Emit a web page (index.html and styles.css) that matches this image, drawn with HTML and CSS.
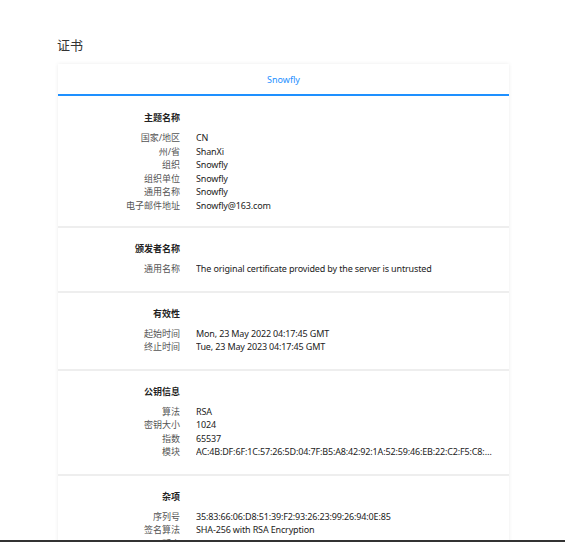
FILE: index.html
```html
<!DOCTYPE html>
<html lang="zh">
<head>
<meta charset="utf-8">
<link rel="stylesheet" href="styles.css">
</head>
<body>
<div class="page">
  <h1 class="title">证书</h1>
  <div class="card">
    <div class="tab">Snowfly</div>
    <section class="sec first">
      <div class="head">主题名称</div>
      <div class="rows">
        <div class="k">国家/地区</div><div class="v">CN</div>
        <div class="k">州/省</div><div class="v">ShanXi</div>
        <div class="k">组织</div><div class="v">Snowfly</div>
        <div class="k">组织单位</div><div class="v">Snowfly</div>
        <div class="k">通用名称</div><div class="v">Snowfly</div>
        <div class="k">电子邮件地址</div><div class="v">Snowfly@163.com</div>
      </div>
    </section>
    <section class="sec">
      <div class="head">颁发者名称</div>
      <div class="rows">
        <div class="k">通用名称</div><div class="v">The original certificate provided by the server is untrusted</div>
      </div>
    </section>
    <section class="sec">
      <div class="head">有效性</div>
      <div class="rows">
        <div class="k">起始时间</div><div class="v">Mon, 23 May 2022 04:17:45 GMT</div>
        <div class="k">终止时间</div><div class="v">Tue, 23 May 2023 04:17:45 GMT</div>
      </div>
    </section>
    <section class="sec">
      <div class="head">公钥信息</div>
      <div class="rows">
        <div class="k">算法</div><div class="v">RSA</div>
        <div class="k">密钥大小</div><div class="v">1024</div>
        <div class="k">指数</div><div class="v">65537</div>
        <div class="k">模块</div><div class="v">AC:4B:DF:6F:1C:57:26:5D:04:7F:B5:A8:42:92:1A:52:59:46:EB:22:C2:F5:C8:5A:1D:3E:9F:44:21:0B</div>
      </div>
    </section>
    <section class="sec">
      <div class="head">杂项</div>
      <div class="rows">
        <div class="k">序列号</div><div class="v">35:83:66:06:D8:51:39:F2:93:26:23:99:26:94:0E:85</div>
        <div class="k">签名算法</div><div class="v">SHA-256 with RSA Encryption</div>
        <div class="k">版本</div><div class="v">3</div>
      </div>
    </section>
  </div>
</div>
<div class="bottombar"></div>
</body>
</html>
```
FILE: styles.css
```css
html, body {
  margin: 0;
  padding: 0;
  background: #fff;
}
body {
  font-family: "Noto Sans", "Noto Sans CJK SC", sans-serif;
  color: #222;
  font-size: 9px;
}
.page {
  padding: 36px 0 0 58px;
  width: 451px;
}
.title {
  margin: 0 0 10px -1px;
  font-size: 13px;
  font-weight: 400;
  line-height: 18px;
  color: #333;
  font-family: "Noto Sans CJK SC", sans-serif;
}
.card {
  background: #fff;
  box-shadow: 0 0 4px rgba(0, 0, 0, 0.08);
}
.tab {
  height: 30px;
  line-height: 31px;
  text-align: center;
  color: #1e90ff;
  font-size: 9px;
  border-bottom: 2px solid #1e90ff;
}
.sec {
  padding: 14px 17px 15px 0;
  border-bottom: 2px solid #eeeeee;
}
.sec.first {
  padding-top: 15px;
  padding-bottom: 14px;
}
.sec:last-child {
  border-bottom: none;
}
.head {
  width: 122px;
  text-align: right;
  font-weight: 700;
  line-height: 13.5px;
  margin-bottom: 6.5px;
  color: #222;
}
.rows {
  display: grid;
  grid-template-columns: 122px minmax(0, 1fr);
  column-gap: 16px;
  line-height: 13.5px;
}
.k {
  text-align: right;
  color: #555;
  white-space: nowrap;
}
.v {
  color: #222;
  white-space: nowrap;
  overflow: hidden;
  text-overflow: ellipsis;
  letter-spacing: -0.15px;
}
.bottombar {
  position: fixed;
  left: 0;
  right: 0;
  bottom: 0;
  height: 2px;
  background: #333;
}
```
